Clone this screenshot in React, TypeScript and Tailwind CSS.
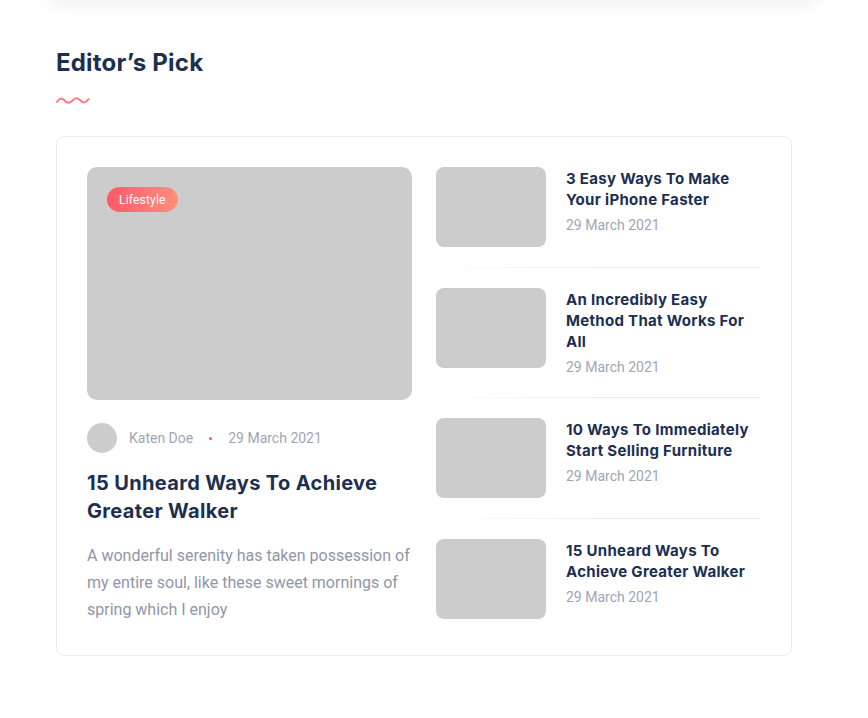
import React from 'react';

const heading = { fontFamily: 'Inter, "Noto Sans", sans-serif' };
const body = { fontFamily: 'Roboto, "Liberation Sans", sans-serif' };

interface Post {
  title: string;
  date: string;
}

const sidePosts: Post[] = [
  { title: '3 Easy Ways To Make Your iPhone Faster', date: '29 March 2021' },
  { title: 'An Incredibly Easy Method That Works For All', date: '29 March 2021' },
  { title: '10 Ways To Immediately Start Selling Furniture', date: '29 March 2021' },
  { title: '15 Unheard Ways To Achieve Greater Walker', date: '29 March 2021' },
];

function Wave() {
  return (
    <svg width="34" height="9" viewBox="0 0 34 9" fill="none">
      <path
        d="M1 6 Q4.5 0 8.5 4.5 T16.5 4.5 T24.5 4.5 T32.5 3"
        stroke="#fe7a85"
        strokeWidth="2"
        strokeLinecap="round"
      />
    </svg>
  );
}

function SidePost({ post }: { post: Post }) {
  return (
    <div className="flex items-start gap-5">
      <div className="w-[110px] h-20 shrink-0 rounded-lg bg-[#cccccc]" />
      <div className="pt-px">
        <h4 className="text-[15px] leading-[21px] font-bold text-[#1c2f50] tracking-[0.3px]" style={heading}>
          {post.title}
        </h4>
        <p className="mt-[5px] text-sm leading-5 text-[#9ea6b5]" style={body}>{post.date}</p>
      </div>
    </div>
  );
}

export default function App() {
  return (
    <div className="min-h-screen bg-white">
      <div className="mx-[46px] h-5 -mt-5 rounded-b-2xl bg-white shadow-[0_4px_18px_rgba(0,0,0,0.07)]" />

      <div className="w-[736px] ml-14 pt-[47px]">
        <h2 className="text-2xl leading-8 font-bold text-[#1c2f50] tracking-[0.2px]" style={heading}>
          Editor’s Pick
        </h2>
        <div className="mt-[17px]">
          <Wave />
        </div>

        <div className="mt-[31px] rounded-lg border border-[#ebebeb] px-[30px] pt-[30px] pb-[32px] grid grid-cols-2 gap-6">
          <div>
            <div className="relative h-[233px] rounded-[10px] bg-[#cccccc]">
              <span
                className="absolute left-5 top-5 h-[25px] px-3 flex items-center rounded-full bg-gradient-to-r from-[#fe5869] to-[#ff8e7d] text-xs text-white tracking-[0.2px]"
                style={body}
              >
                Lifestyle
              </span>
            </div>
            <div className="mt-[23px] flex items-center text-sm text-[#9ea6b5]" style={body}>
              <div className="w-[30px] h-[30px] rounded-full bg-[#cccccc]" />
              <span className="ml-3">Katen Doe</span>
              <span className="ml-4 w-[3px] h-[3px] rounded-full bg-[#f0566a]" />
              <span className="ml-4">29 March 2021</span>
            </div>
            <h3 className="mt-4 text-xl leading-7 font-bold text-[#1c2f50] tracking-[0.35px]" style={heading}>
              15 Unheard Ways To Achieve Greater Walker
            </h3>
            <p className="mt-[17px] text-base leading-[27px] text-[#8e97a8]" style={body}>
              A wonderful serenity has taken possession of my entire soul, like these sweet mornings of spring which I enjoy
            </p>
          </div>

          <div className="flex flex-col">
            {sidePosts.map((p, i) => (
              <div key={i}>
                {i > 0 && <div className="h-px my-5 bg-gradient-to-r from-transparent via-[#ececec] to-[#ececec]" />}
                <SidePost post={p} />
              </div>
            ))}
          </div>
        </div>
      </div>
    </div>
  );
}
